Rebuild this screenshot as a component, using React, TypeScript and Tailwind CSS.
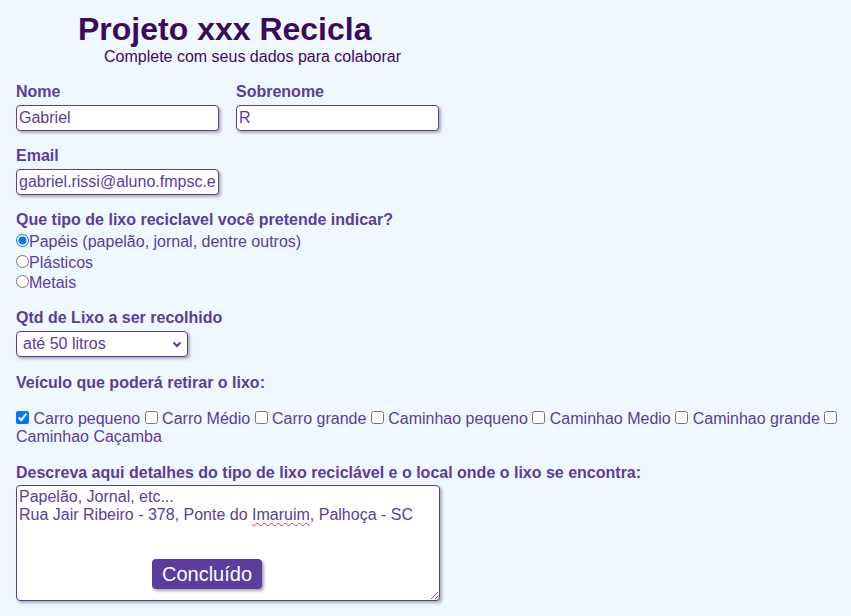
import React from 'react';

const vehicles = [
  { name: 'Carro pequeno', checked: true },
  { name: 'Carro Médio', checked: false },
  { name: 'Carro grande', checked: false },
  { name: 'Caminhao pequeno', checked: false },
  { name: 'Caminhao Medio', checked: false },
  { name: 'Caminhao grande', checked: false },
  { name: 'Caminhao Caçamba', checked: false },
];

const fieldCls =
  "h-[26px] w-[203px] rounded-[4px] border border-[#5b3c9b] bg-white px-[2px] text-[#5b3c9b] shadow-[2px_2px_3px_rgba(0,0,0,0.3)] outline-none";

export default function App() {
  return (
    <div className="min-h-screen bg-[#f0f8ff] font-['Liberation_Sans',Arial,sans-serif] text-base text-[#5b3c9b]">
      <div className="pl-4 pt-[11px] pb-4">
        {/* Header */}
        <h1 className="ml-[62px] text-[32px] font-bold leading-[37px] text-[#3c0a5c]">Projeto xxx Recicla</h1>
        <p className="ml-[88px] leading-[18px] text-[#3c0a5c]">Complete com seus dados para colaborar</p>

        {/* Nome / Sobrenome */}
        <div className="mt-[17px] flex gap-[17px]">
          <div>
            <label className="mb-[4px] block font-bold leading-[18px]">Nome</label>
            <input className={fieldCls} defaultValue="Gabriel" />
          </div>
          <div>
            <label className="mb-[4px] block font-bold leading-[18px]">Sobrenome</label>
            <input className={fieldCls} defaultValue="R" />
          </div>
        </div>

        {/* Email */}
        <div className="mt-[16px]">
          <label className="mb-[4px] block font-bold leading-[18px]">Email</label>
          <input className={fieldCls} defaultValue="gabriel.rissi@aluno.fmpsc.edu.br" />
        </div>

        {/* Tipo de lixo */}
        <div className="mt-[16px]">
          <p className="mb-[3px] font-bold leading-[18px]">Que tipo de lixo reciclavel você pretende indicar?</p>
          <div className="h-[20.5px] leading-[20.5px]">
            <input type="radio" name="tipo" defaultChecked className="h-[13px] w-[13px]" />Papéis (papelão, jornal, dentre outros)
          </div>
          <div className="h-[20.5px] leading-[20.5px]">
            <input type="radio" name="tipo" className="h-[13px] w-[13px]" />Plásticos
          </div>
          <div className="h-[20.5px] leading-[20.5px]">
            <input type="radio" name="tipo" className="h-[13px] w-[13px]" />Metais
          </div>
        </div>

        {/* Quantidade */}
        <div className="mt-[15px]">
          <label className="mb-[4px] block font-bold leading-[18px]">Qtd de Lixo a ser recolhido</label>
          <div className="relative w-[172px]">
            <select className="h-[26px] w-[172px] appearance-none rounded-[4px] border border-[#5b3c9b] bg-white pl-[6px] text-[#5b3c9b] shadow-[2px_2px_3px_rgba(0,0,0,0.3)] outline-none">
              <option>até 50 litros</option>
              <option>até 100 litros</option>
              <option>mais de 100 litros</option>
            </select>
            <svg className="pointer-events-none absolute right-[6px] top-[10px]" width="10" height="7" viewBox="0 0 10 7">
              <polyline points="1.5,1.5 5,5 8.5,1.5" fill="none" stroke="#5b3c9b" strokeWidth="2" />
            </svg>
          </div>
        </div>

        {/* Veículos */}
        <p className="mt-[17px] font-bold leading-[18px]">Veículo que poderá retirar o lixo:</p>
        <p className="mt-[18px] leading-[18.4px]">
          {vehicles.map((v, i) => (
            <React.Fragment key={v.name}>
              <input type="checkbox" defaultChecked={v.checked} className="h-[13px] w-[13px]" /> {v.name}
              {i < vehicles.length - 1 ? ' ' : ''}
            </React.Fragment>
          ))}
        </p>

        {/* Descrição */}
        <label className="mt-[18px] mb-[3px] block font-bold leading-[18px]">
          Descreva aqui detalhes do tipo de lixo reciclável e o local onde o lixo se encontra:
        </label>
        <div className="relative w-[424px]">
          <div className="h-[116px] w-[424px] resize overflow-auto whitespace-pre-wrap rounded-[4px] border border-[#5b3c9b] bg-white p-[2px] leading-[18px] shadow-[2px_2px_3px_rgba(0,0,0,0.3)]">
            Papelão, Jornal, etc...{'\n'}Rua Jair Ribeiro - 378, Ponte do{' '}
            <span className="underline decoration-red-500 decoration-wavy decoration-1 underline-offset-2">Imaruim</span>, Palhoça - SC
          </div>
          <button className="absolute left-[136px] top-[74px] h-[30px] w-[110px] rounded-[4px] bg-[#5a3d9c] text-[20px] leading-[30px] text-white shadow-[2px_2px_3px_rgba(0,0,0,0.35)]">
            Concluído
          </button>
        </div>
      </div>
    </div>
  );
}
